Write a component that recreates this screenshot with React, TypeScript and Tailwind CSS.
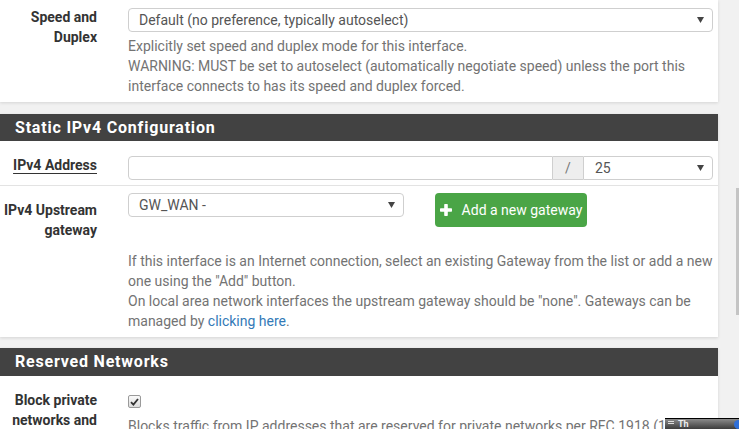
import React from 'react';

const Caret: React.FC = () => (
  <svg width="7" height="6" viewBox="0 0 7 6" className="shrink-0">
    <polygon points="0,0 7,0 3.5,6" fill="#444" />
  </svg>
);

const Select: React.FC<{ value: string; className?: string }> = ({ value, className }) => (
  <div
    className={`flex h-[24px] items-center justify-between border border-[#cfcfcf] bg-white pl-[10px] pr-[8px] text-[#555] ${className ?? ''}`}
  >
    <span className="truncate leading-[20px]">{value}</span>
    <Caret />
  </div>
);

const Row: React.FC<{ label: React.ReactNode; labelTop: string; contentTop: string; className?: string; children: React.ReactNode }> = ({
  label,
  labelTop,
  contentTop,
  className,
  children,
}) => (
  <div className={`flex ${className ?? ''}`}>
    <div className={`w-[128px] shrink-0 pr-[31px] text-right font-bold leading-[20px] text-[#333] ${labelTop}`}>{label}</div>
    <div className={`min-w-0 flex-1 pr-[5px] ${contentTop}`}>{children}</div>
  </div>
);

const Header: React.FC<{ title: string; h: string }> = ({ title, h }) => (
  <div className={`flex items-center bg-[#424242] px-[15px] text-[16px] font-bold tracking-[0.8px] text-white ${h}`}>
    {title}
  </div>
);

export default function App() {
  return (
    <div className="relative h-[429px] w-[739px] overflow-hidden bg-[#f1f1f1] font-['Roboto',sans-serif] text-[14px]">
      <div className="w-[718px]">
        {/* Speed and duplex panel (top is scrolled off) */}
        <div className="bg-white pb-[6px] shadow-[0_1px_3px_rgba(0,0,0,0.12)]">
          <Row label={<>Speed and<br />Duplex</>} labelTop="pt-[7px]" contentTop="pt-[8px]">
            <Select value="Default (no preference, typically autoselect)" className="rounded-[4px]" />
            <div className="mt-[4px] leading-[20px] text-[#737373]">
              Explicitly set speed and duplex mode for this interface.
              <br />
              WARNING: MUST be set to autoselect (automatically negotiate speed) unless the port this interface connects to has its speed and duplex forced.
            </div>
          </Row>
        </div>

        {/* Static IPv4 */}
        <div className="mt-[12px] bg-white shadow-[0_1px_3px_rgba(0,0,0,0.12)]">
          <Header title="Static IPv4 Configuration" h="h-[27px]" />
          <Row
            label={<span className="underline decoration-[#333] underline-offset-[3px]">IPv4 Address</span>}
            labelTop="pt-[14px]"
            contentTop="pt-[15px] pb-[5px]"
            className="border-b border-[#e3e3e3]"
          >
            <div className="flex h-[24px]">
              <div className="w-[425px] rounded-l-[4px] border border-[#cfcfcf] bg-white" />
              <div className="flex w-[30px] items-center justify-center border-y border-[#cfcfcf] bg-[#eeeeee] text-[#777]">/</div>
              <Select value="25" className="w-[130px] rounded-r-[4px] pl-[11px]" />
            </div>
          </Row>
          <Row label={<>IPv4 Upstream<br />gateway</>} labelTop="pt-[14px]" contentTop="pt-[7px] pb-[6px]">
            <div className="flex items-start">
              <Select value="GW_WAN -" className="w-[276px] rounded-[4px]" />
              <button className="ml-[31px] flex h-[34px] w-[152px] items-center justify-center gap-[10px] rounded-[4px] bg-[#4aa546] text-white">
                <svg width="12" height="12" viewBox="0 0 12 12">
                  <rect x="4.2" y="0" width="3.6" height="12" rx="0.7" fill="#fff" />
                  <rect x="0" y="4.2" width="12" height="3.6" rx="0.7" fill="#fff" />
                </svg>
                <span>Add a new gateway</span>
              </button>
            </div>
            <div className="mt-[24px] leading-[20px] text-[#737373]">
              If this interface is an Internet connection, select an existing Gateway from the list or add a new one using the "Add" button.
              <br />
              On local area network interfaces the upstream gateway should be "none". Gateways can be managed by{' '}
              <span className="text-[#337ab7]">clicking here</span>.
            </div>
          </Row>
        </div>

        {/* Reserved networks */}
        <div className="mt-[11px] bg-white shadow-[0_1px_3px_rgba(0,0,0,0.12)]">
          <Header title="Reserved Networks" h="h-[28px]" />
          <Row label={<>Block private<br />networks and</>} labelTop="pt-[14px]" contentTop="pt-[19px]">
            <div className="flex h-[13px] w-[13px] items-center justify-center rounded-[2px] border border-[#9a9a9a] bg-gradient-to-b from-[#fafafa] to-[#dcdcdc]">
              <svg width="9" height="8" viewBox="0 0 9 8">
                <path d="M1 4.2 L3.4 6.6 L8 1" stroke="#333" strokeWidth="1.8" fill="none" />
              </svg>
            </div>
            <div className="mt-[8px] whitespace-nowrap leading-[20px] text-[#737373]">
              Blocks traffic from IP addresses that are reserved for private networks per RFC 1918 (10/8, 172.16/12, 192.168/16)
            </div>
          </Row>
        </div>
      </div>

      {/* scrollbar */}
      <div className="absolute left-[736px] top-[188px] h-[127px] w-[3px] bg-[#c4c4c4]" />

      {/* taskbar fragment */}
      <div className="absolute left-[665px] top-[418px] flex h-[11px] w-[74px] items-start gap-[4px] border-t border-black bg-gradient-to-b from-[#8c8c8c] to-[#3d3d3d] pl-[3px] pt-[1px]">
        <div className="flex flex-col gap-[1px] pt-[1px]">
          <div className="h-[1px] w-[6px] bg-[#ddd]" />
          <div className="h-[1px] w-[6px] bg-[#ddd]" />
        </div>
        <span className="text-[9px] font-bold leading-[9px] text-[#eee]">Th</span>
        <div className="ml-auto h-[9px] w-[5px] rounded-l-full bg-[#2f6fd8]" />
      </div>
    </div>
  );
}
